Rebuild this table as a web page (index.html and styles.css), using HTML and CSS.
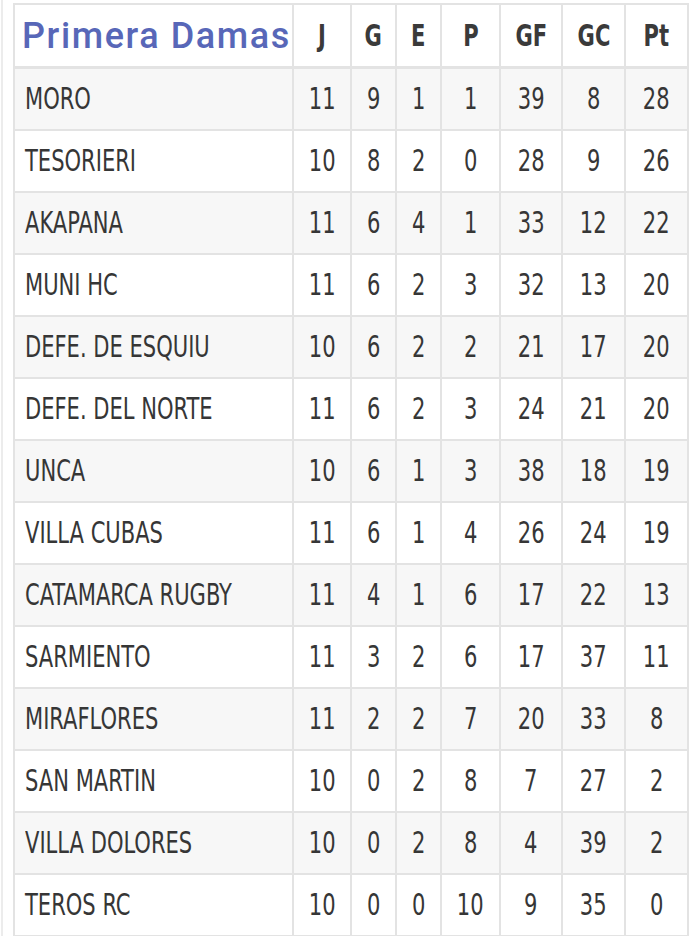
FILE: index.html
```html
<!DOCTYPE html>
<html>
<head>
<meta charset="utf-8">
<link rel="stylesheet" href="styles.css">
</head>
<body>
<div class="wrap">
<table class="standings">
<colgroup>
<col class="c-team"><col class="c-j"><col class="c-g"><col class="c-e"><col class="c-p"><col class="c-gf"><col class="c-gc"><col class="c-pt">
</colgroup>
<thead>
<tr><th class="title">Primera Damas</th><th><span class="n">J</span></th><th><span class="n">G</span></th><th><span class="n">E</span></th><th><span class="n">P</span></th><th><span class="n">GF</span></th><th><span class="n">GC</span></th><th><span class="n">Pt</span></th></tr>
</thead>
<tbody>
<tr><td class="team"><span class="t">MORO</span></td><td><span class="n">11</span></td><td><span class="n">9</span></td><td><span class="n">1</span></td><td><span class="n">1</span></td><td><span class="n">39</span></td><td><span class="n">8</span></td><td><span class="n">28</span></td></tr>
<tr><td class="team"><span class="t">TESORIERI</span></td><td><span class="n">10</span></td><td><span class="n">8</span></td><td><span class="n">2</span></td><td><span class="n">0</span></td><td><span class="n">28</span></td><td><span class="n">9</span></td><td><span class="n">26</span></td></tr>
<tr><td class="team"><span class="t">AKAPANA</span></td><td><span class="n">11</span></td><td><span class="n">6</span></td><td><span class="n">4</span></td><td><span class="n">1</span></td><td><span class="n">33</span></td><td><span class="n">12</span></td><td><span class="n">22</span></td></tr>
<tr><td class="team"><span class="t">MUNI HC</span></td><td><span class="n">11</span></td><td><span class="n">6</span></td><td><span class="n">2</span></td><td><span class="n">3</span></td><td><span class="n">32</span></td><td><span class="n">13</span></td><td><span class="n">20</span></td></tr>
<tr><td class="team"><span class="t">DEFE. DE ESQUIU</span></td><td><span class="n">10</span></td><td><span class="n">6</span></td><td><span class="n">2</span></td><td><span class="n">2</span></td><td><span class="n">21</span></td><td><span class="n">17</span></td><td><span class="n">20</span></td></tr>
<tr><td class="team"><span class="t">DEFE. DEL NORTE</span></td><td><span class="n">11</span></td><td><span class="n">6</span></td><td><span class="n">2</span></td><td><span class="n">3</span></td><td><span class="n">24</span></td><td><span class="n">21</span></td><td><span class="n">20</span></td></tr>
<tr><td class="team"><span class="t">UNCA</span></td><td><span class="n">10</span></td><td><span class="n">6</span></td><td><span class="n">1</span></td><td><span class="n">3</span></td><td><span class="n">38</span></td><td><span class="n">18</span></td><td><span class="n">19</span></td></tr>
<tr><td class="team"><span class="t">VILLA CUBAS</span></td><td><span class="n">11</span></td><td><span class="n">6</span></td><td><span class="n">1</span></td><td><span class="n">4</span></td><td><span class="n">26</span></td><td><span class="n">24</span></td><td><span class="n">19</span></td></tr>
<tr><td class="team"><span class="t">CATAMARCA RUGBY</span></td><td><span class="n">11</span></td><td><span class="n">4</span></td><td><span class="n">1</span></td><td><span class="n">6</span></td><td><span class="n">17</span></td><td><span class="n">22</span></td><td><span class="n">13</span></td></tr>
<tr><td class="team"><span class="t">SARMIENTO</span></td><td><span class="n">11</span></td><td><span class="n">3</span></td><td><span class="n">2</span></td><td><span class="n">6</span></td><td><span class="n">17</span></td><td><span class="n">37</span></td><td><span class="n">11</span></td></tr>
<tr><td class="team"><span class="t">MIRAFLORES</span></td><td><span class="n">11</span></td><td><span class="n">2</span></td><td><span class="n">2</span></td><td><span class="n">7</span></td><td><span class="n">20</span></td><td><span class="n">33</span></td><td><span class="n">8</span></td></tr>
<tr><td class="team"><span class="t">SAN MARTIN</span></td><td><span class="n">10</span></td><td><span class="n">0</span></td><td><span class="n">2</span></td><td><span class="n">8</span></td><td><span class="n">7</span></td><td><span class="n">27</span></td><td><span class="n">2</span></td></tr>
<tr><td class="team"><span class="t">VILLA DOLORES</span></td><td><span class="n">10</span></td><td><span class="n">0</span></td><td><span class="n">2</span></td><td><span class="n">8</span></td><td><span class="n">4</span></td><td><span class="n">39</span></td><td><span class="n">2</span></td></tr>
<tr><td class="team"><span class="t">TEROS RC</span></td><td><span class="n">10</span></td><td><span class="n">0</span></td><td><span class="n">0</span></td><td><span class="n">10</span></td><td><span class="n">9</span></td><td><span class="n">35</span></td><td><span class="n">0</span></td></tr>
</tbody>
</table>
</div>
</body>
</html>
```

FILE: styles.css
```css
html, body {
  margin: 0;
  padding: 0;
  background: #ffffff;
}
.wrap {
  border-left: 2px solid #ececec;
  margin-left: 1px;
  padding: 3px 0 2px 10px;
  min-height: 931px;
}
.standings {
  width: 676px;
  table-layout: fixed;
  border-collapse: collapse;
  font-family: "DejaVu Sans Condensed", "DejaVu Sans", sans-serif;
  font-stretch: condensed;
  color: #363636;
}
.c-team { width: 279px; }
.c-j { width: 58px; }
.c-g { width: 45px; }
.c-e { width: 45px; }
.c-p { width: 59px; }
.c-gf { width: 62px; }
.c-gc { width: 63px; }
.c-pt { width: 63px; }
.standings th,
.standings td {
  border: 2px solid #e3e3e3;
  text-align: center;
  padding: 0;
  font-size: 30px;
  line-height: 1;
  white-space: nowrap;
}
.standings th {
  height: 61px;
  font-weight: bold;
  color: #3a3a3a;
  border-bottom-width: 3px;
}
.standings td {
  height: 60px;
}
.t,
.n {
  display: inline-block;
  transform: scaleX(0.78);
}
.t {
  transform-origin: left center;
}
.n {
  transform-origin: center center;
}
.standings th.title {
  text-align: left;
  padding-left: 7px;
  font-family: Roboto, "Liberation Sans", sans-serif;
  font-stretch: normal;
  font-weight: 500;
  font-size: 36px;
  letter-spacing: 1.6px;
  color: #5867b8;
}
.standings td.team {
  text-align: left;
  padding-left: 10px;
}
.standings tbody tr:nth-child(odd) td {
  background: #f7f7f7;
}
```
